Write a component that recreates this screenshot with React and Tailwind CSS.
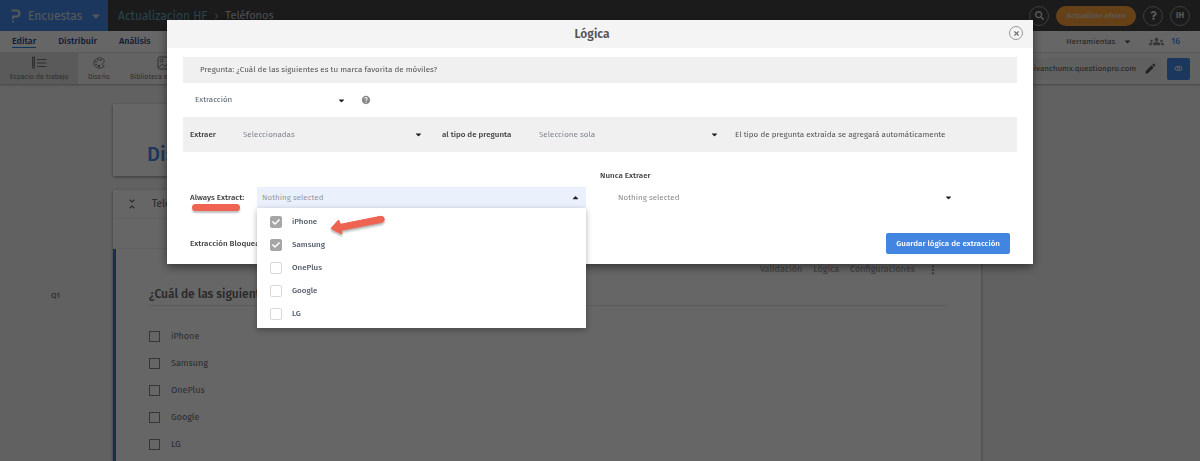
import { useState } from "react";
import { FaCaretDown, FaCaretUp, FaCheck, FaQuestion, FaSearch, FaTimes } from "react-icons/fa";
import { MdEdit, MdGroups, MdHelp, MdMoreVert, MdOutlineRemoveRedEye, MdUnfoldLess } from "react-icons/md";
import { IoColorPaletteOutline } from "react-icons/io5";

const BRANDS = ["iPhone", "Samsung", "OnePlus", "Google", "LG"];

function Logo() {
    return (
    <svg viewBox="0 0 10 14" className="w-[10px] h-[14px]" fill="none" stroke="currentColor" strokeWidth="1.8">
        <path d="M0.5 1.5H5.5A3 3 0 0 1 5.5 7.5H2V10" />
        <path d="M1.100 12.500H2.900" />
    </svg>
    );
}

function WorkspaceIcon() {
    return (
    <svg viewBox="0 0 16 14" className="w-4 h-[14px]" fill="none" stroke="currentColor">
        <path d="M1.5 1H3.5V10.5L2.5 13L1.5 10.5Z" fill="currentColor" fillOpacity="0.5" />
        <path d="M6 3.5H15.5M6 7H15.5M6 10.5H15.5" />
    </svg>
    );
}

function LibraryIcon() {
    return (
    <svg viewBox="0 0 16 14" className="w-4 h-[14px]" fill="none" stroke="currentColor">
        <path d="M13.500 1H2.500A1.500 1.500 0 0 0 1 2.500V11.500A1.500 1.500 0 0 0 2.500 13H13.500" />
        <circle cx="4.500" cy="4.500" r="1.500" />
        <path d="M1.500 11.500L5.500 8L8 10.500L12 6L15 8.500" />
    </svg>
    );
}

function TopBar() {
    return (
    <header className="flex h-[31px] bg-[#444444] text-[#dddddd]">
        <button className="flex items-center w-[108px] shrink-0 pl-[11px] bg-[#478be9]">
        <Logo />
        <span className="ml-[7px] text-[12px]">Encuestas</span>
        <FaCaretDown className="ml-2 size-3" />
        </button>
        <nav className="flex items-center pl-[10px] text-[12px]">
        <a href="#" className="text-[#66a9bd]">Actualizacion HF</a>
        <span className="px-[7px] text-[#999999]">›</span>
        <span className="pt-px text-[11px] text-[#cccccc]">Teléfonos</span>
        </nav>
        <div className="ml-auto flex items-center gap-[7px] pr-[10px]">
        <button aria-label="Buscar" className="grid place-items-center size-5 rounded-full border border-[#999999]">
            <FaSearch className="size-[9px]" />
        </button>
        <button className="h-5 w-20 rounded-full bg-[#ffa43a] text-[8px] font-medium">Actualizar ahora</button>
        <button aria-label="Ayuda" className="grid place-items-center size-5 rounded-full border border-[#999999]">
            <FaQuestion className="size-[9px]" />
        </button>
        <button className="size-5 rounded-full border border-[#999999] text-[9px] font-semibold">IH</button>
        </div>
    </header>
    );
}

function NavBar() {
    return (
    <div className="flex items-center h-[22px] px-3 border-b border-[#e4e4e4] bg-white text-[#2d478c]">
        <nav className="flex gap-[22px] text-[9px] leading-[12px] font-medium">
        <a href="#" className="border-b border-[#1b87e6]">Editar</a>
        <a href="#">Distribuir</a>
        <a href="#">Análisis</a>
        </nav>
        <button className="ml-auto flex items-center gap-2 text-[8px] text-[#545454]">
        Herramientas
        <FaCaretDown className="size-[9px]" />
        </button>
        <a href="#" className="ml-[17px] mr-2 flex items-center gap-[7px] text-[9px] text-[#1b6be6]">
        <MdGroups className="size-[15px] text-[#888888]" />
        16
        </a>
    </div>
    );
}

function ToolBar() {
    const tool = "flex flex-col items-center gap-[2px] pt-[3px] text-[7px] leading-[10px] whitespace-nowrap";
    return (
    <div className="flex h-[31px] bg-[#f8f8f8] text-[#777777] shadow-[0_1px_2px_rgba(0,0,0,0.3)]">
        <button className={`${tool} w-[78px] bg-[#e0e0e0]`}>
        <WorkspaceIcon />
        Espacio de trabajo
        </button>
        <button className={`${tool} w-[42px]`}>
        <IoColorPaletteOutline className="w-4 h-[14px]" />
        Diseño
        </button>
        <button className={`${tool} w-[90px]`}>
        <LibraryIcon />
        Biblioteca multimedia
        </button>
        <div className="ml-auto flex items-center gap-[6px] pr-[10px]">
        <div className="flex items-center justify-end gap-2 w-[250px] h-[22px] pr-1 bg-[#f0f0f0] text-[8px] text-[#545454]">
            ivanchumx.questionpro.com
            <MdEdit className="size-[13px]" />
        </div>
        <button aria-label="Vista previa" className="grid place-items-center w-[23px] h-[22px] rounded-xs bg-[#478be9] text-white">
            <MdOutlineRemoveRedEye className="size-[9px]" />
        </button>
        </div>
    </div>
    );
}

function Survey() {
    return (
    <main className="pl-[113px] pr-[219px] pt-5">
        <section className="h-[72px] pl-[34px] pt-[34px] bg-white shadow-[0_1px_3px_rgba(0,0,0,0.4)]">
        <h1 className="text-[20px] leading-[32px] font-medium text-[#478be9]">Distribución</h1>
        </section>
        <section className="mt-[14px] h-[480px] bg-white shadow-[0_1px_3px_rgba(0,0,0,0.4)]">
        <div className="flex items-center h-[29px] gap-[13px] pl-3 border-b border-[#f0f0f0] text-[10px] text-[#666666]">
            <MdUnfoldLess className="size-[14px]" />
            Teléfonos
        </div>
        <div className="h-[30px] border-b border-[#f0f0f0]" />
        <div className="h-[421px] pl-[33px] pr-[35px] pt-[13px] border-l-3 border-[#3575cc]">
            <div className="flex items-center justify-end gap-[11px] h-4 pr-[6px] text-[9px] text-[#999999]">
            <button>Validación</button>
            <button>Lógica</button>
            <button>Configuraciones</button>
            <button aria-label="Más"><MdMoreVert className="size-[14px]" /></button>
            </div>
            <h2 className="mt-2 h-5 border-b border-[#e6e6e6] text-[12px] leading-[16px] font-medium text-[#666666]">
            ¿Cuál de las siguientes es tu marca favorita de móviles?
            </h2>
            <div className="flex flex-col mt-[17px] text-[9px] text-[#707070]">
            {BRANDS.map((brand) => (
                <label key={brand} className="flex items-center gap-[11px] h-[27px]">
                <input type="checkbox" className="appearance-none size-[11px] border border-[#888888]" />
                {brand}
                </label>
            ))}
            </div>
        </div>
        </section>
        <span className="absolute left-[51px] top-[290px] text-[8px] leading-[12px] text-[#545454]">Q1</span>
    </main>
    );
}

function SelectBox({ id, label, value, className }) {
    return (
    <div className={`flex items-center ${className}`}>
        <select id={id} aria-label={label} className="flex-1 min-w-0 h-5 appearance-none bg-transparent outline-none">
        <option>{value}</option>
        </select>
        <FaCaretDown className="size-[9px] shrink-0 pointer-events-none text-[#222222]" />
    </div>
    );
}

function ExtractMenu({ selected, onToggle }) {
    return (
    <div className="absolute left-0 right-0 top-full z-10 pt-[2px] pb-[3px] bg-white shadow-[0_2px_6px_rgba(0,0,0,0.3)]">
        {BRANDS.map((brand) => (
        <label key={brand} className="flex items-center h-[23px] pl-[13px] text-[8px] font-medium text-[#545e6b]">
            <span className="relative grid place-items-center size-3">
            <input
                type="checkbox"
                checked={selected.includes(brand)}
                onChange={() => onToggle(brand)}
                className="appearance-none size-3 rounded-xs border border-[#d9d9d9] checked:border-[#a6a6a6] checked:bg-[#a6a6a6]"
            />
            {selected.includes(brand) && (
                <FaCheck className="absolute size-2 text-white pointer-events-none" />
            )}
            </span>
            <span className="ml-[10px]">{brand}</span>
        </label>
        ))}
    </div>
    );
}

function Arrow() {
    return (
    <svg viewBox="0 0 58 26" className="absolute left-[72px] top-[26px] z-20 w-[58px] h-[26px] drop-shadow-[0_2px_1px_rgba(0,0,0,0.3)]" fill="#ee6352">
        <path d="M2 15.500L9.500 7L11.500 11.300L51.500 3.300Q54.500 3 55.200 5.500Q55.500 8.700 53 9.300L12.500 17.200L12.800 21Z" stroke="#ee6352" strokeLinejoin="round" />
    </svg>
    );
}

function LogicDialog() {
    const [selected, setSelected] = useState(["iPhone", "Samsung"]);
    const [open, setOpen] = useState(true);

    const toggle = (brand) =>
    setSelected((prev) => (prev.includes(brand) ? prev.filter((b) => b !== brand) : [...prev, brand]));

    return (
    <div role="dialog" aria-labelledby="dialog-title" className="w-full max-w-[866px] bg-white text-[8px] text-[#404040] shadow-[0_3px_9px_rgba(0,0,0,0.5)]">
        <div className="relative flex items-center justify-center h-7 bg-[#f4f4f4]">
        <h2 id="dialog-title" className="pr-4 text-[12px] font-semibold text-[#545454]">Lógica</h2>
        <button aria-label="Cerrar" className="absolute right-[10px] top-[6px] grid place-items-center size-[14px] rounded-full border border-[#999999] text-[#777777]">
            <FaTimes className="size-[7px]" />
        </button>
        </div>
        <div className="px-4 pt-[9px] pb-[10px]">
        <p className="flex items-center h-[26px] pl-[17px] bg-[#f0f0f0] text-[#555555]">
            Pregunta: ¿Cuál de las siguientes es tu marca favorita de móviles?
        </p>
        <div className="flex items-center gap-[15px] h-[34px] pl-3">
            <SelectBox label="Tipo de lógica" value="Extracción" className="w-[151px] text-[#545e6b]" />
            <MdHelp className="size-[10px] text-[#888888]" />
        </div>
        <div className="flex items-center h-[35px] pl-[7px] bg-[#f0f0f0]">
            <label htmlFor="extract" className="w-[53px] font-medium">Extraer</label>
            <SelectBox id="extract" value="Seleccionadas" className="w-[180px] text-[#80868f]" />
            <label htmlFor="question-type" className="w-[116px] pl-[19px] font-medium whitespace-nowrap">al tipo de pregunta</label>
            <SelectBox id="question-type" value="Seleccione sola" className="w-[180px] text-[#80868f]" />
            <span className="pl-4 text-[#555555]">El tipo de pregunta extraída se agregará automáticamente</span>
        </div>
        <div className="flex items-end pt-[18px] pl-[7px]">
            <div className="relative flex items-center w-[67px] h-[21px]">
            <label htmlFor="always" className="font-medium">Always Extract:</label>
            <span className="absolute left-[2px] top-[17px] w-12 h-[7px] rounded-sm bg-[#ee6352] shadow-[0_2px_2px_rgba(0,0,0,0.25)]" />
            </div>
            <div className="relative w-[329px]">
            <button
                id="always"
                aria-expanded={open}
                onClick={() => setOpen(!open)}
                className="flex items-center justify-between w-full h-[21px] pl-[5px] pr-[6px] bg-[#eaf1fc] text-[#999999]"
            >
                Nothing selected
                <FaCaretUp className="size-[9px] text-[#222222]" />
            </button>
            {open && <ExtractMenu selected={selected} onToggle={toggle} />}
            <Arrow />
            </div>
            <div className="flex-1 pl-[14px]">
            <label htmlFor="never" className="block h-[17px] leading-[12px] font-medium">Nunca Extraer</label>
            <SelectBox id="never" value="Nothing selected" className="h-[21px] pl-[18px] pr-16 text-[#8c8c8c]" />
            </div>
        </div>
        <div className="flex items-center justify-between mt-[25px] pl-[7px] pr-[7px]">
            <span className="font-medium">Extracción Bloqueada</span>
            <button className="h-[21px] px-[10px] rounded-xs bg-[#4285e0] font-medium text-white">Guardar lógica de extracción</button>
        </div>
        </div>
    </div>
    );
}

export default function App() {
    return (
    <div className="relative h-screen overflow-hidden bg-[#f3f3f3] font-['Fira_Sans','Noto_Sans',sans-serif]">
        <TopBar />
        <NavBar />
        <ToolBar />
        <Survey />
        <div className="fixed inset-0 flex items-start justify-center pt-5 bg-black/60">
        <LogicDialog />
        </div>
    </div>
    );
}
